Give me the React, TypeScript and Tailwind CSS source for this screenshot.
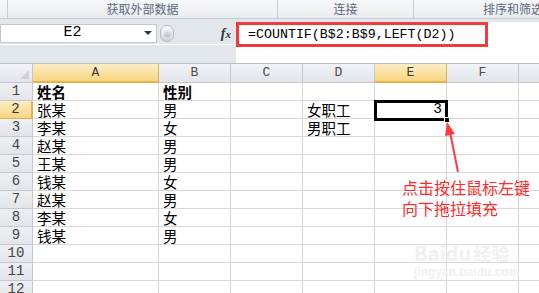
import React from 'react';

const cjk = "font-['Noto_Sans_CJK_SC','Noto_Sans',sans-serif]";
const mono = "font-['Liberation_Mono','DejaVu_Sans_Mono',monospace]";

// 表格数据 (A..G)
const rows: string[][] = [
  ['姓名', '性别', '', '', '', '', ''],
  ['张某', '男', '', '女职工', '3', '', ''],
  ['李某', '女', '', '男职工', '', '', ''],
  ['赵某', '男', '', '', '', '', ''],
  ['王某', '男', '', '', '', '', ''],
  ['钱某', '女', '', '', '', '', ''],
  ['赵某', '男', '', '', '', '', ''],
  ['李某', '女', '', '', '', '', ''],
  ['钱某', '男', '', '', '', '', ''],
  ['', '', '', '', '', '', ''],
  ['', '', '', '', '', '', ''],
  ['', '', '', '', '', '', ''],
];

// G 列在画面外，标题字母看不到
const letters = ['A', 'B', 'C', 'D', 'E', 'F', ''];
const gridCols = 'grid grid-cols-[33px_126px_72px_72px_72px_72px_72px_100px]';

function ColHeader({ label, active }: { label: string; active: boolean }) {
  return (
    <div
      className={`h-[19px] flex items-center justify-center border-r text-[13px] ${mono} ${
        active
          ? 'bg-gradient-to-b from-[#fdeec6] to-[#f8d57e] border-r-[#d9b35c] border-b-2 border-b-[#e9b14a] text-[#3a3a3a]'
          : 'bg-gradient-to-b from-[#f1f3f6] to-[#e1e5ea] border-r-[#c3c8cf] border-b border-b-[#c3c8cf] text-[#4a4a4a]'
      }`}
    >
      {label}
    </div>
  );
}

export default function App() {
  return (
    <div className="relative w-[539px] h-[293px] overflow-hidden bg-white select-none">
      {/* Ribbon 分组标签 */}
      <div className={`flex h-[19px] bg-gradient-to-b from-[#f7f8fa] to-[#e8ebef] border-b border-[#c8cdd4] text-[12px] leading-[18px] text-[#5e6878] ${cjk}`}>
        <div className="w-[8px] shrink-0 border-r border-[#c9ced6]" />
        <div className="w-[270px] shrink-0 border-r border-[#c9ced6] flex items-center justify-center">获取外部数据</div>
        <div className="w-[136px] shrink-0 border-r border-[#c9ced6] flex items-center justify-center">连接</div>
        <div className="w-[125px] shrink-0 pl-[69px] flex items-center whitespace-nowrap overflow-hidden">排序和筛选</div>
      </div>

      {/* 编辑栏 */}
      <div className="flex h-[45px] bg-[#e3e6eb] border-b border-[#b9bec6]">
        <div className="w-[236px] shrink-0 flex flex-col">
          <div className="h-[5px]" />
          <div className="flex h-[19px] items-center">
            <div className={`w-[157px] h-[19px] bg-white border border-[#c2c7ce] flex items-center relative ${mono} text-[15px] text-black`}>
              <span className="flex-1 text-center pr-[12px]">E2</span>
              <span className="absolute right-[4px] top-[6px] w-0 h-0 border-l-[4px] border-r-[4px] border-t-[4px] border-l-transparent border-r-transparent border-t-[#333]" />
            </div>
            <div className="ml-[3px] w-[14px] h-[17px] rounded-full bg-gradient-to-b from-[#fdfdfd] to-[#cfd3d9] border border-[#b3b8c0] flex items-center justify-center">
              <div className="w-[7px] h-[7px] rounded-full bg-gradient-to-b from-[#e9ebee] to-[#b8bdc4]" />
            </div>
            <div className="flex-1 flex justify-end pr-[5px]">
              <span className="font-['Liberation_Serif',serif] italic font-bold text-[14px] text-[#333] leading-none">
                f<span className="text-[11px]">x</span>
              </span>
            </div>
          </div>
          <div className="flex-1 mt-[1px] border-t border-white" />
        </div>
        <div className="flex-1 mt-[3px] bg-white flex flex-col">
          <div className={`w-[252px] h-[25px] border-[3px] border-[#f23a3a] flex items-center pl-[9px] ${mono} text-[13.3px] text-black whitespace-nowrap`}>
            =COUNTIF(B$2:B$9,LEFT(D2))
          </div>
        </div>
      </div>

      {/* 列标题 */}
      <div className={gridCols}>
        <div className="h-[19px] bg-gradient-to-b from-[#f1f3f6] to-[#e1e5ea] border-r border-b border-[#c3c8cf] flex items-end justify-end p-[3px]">
          <span className="w-0 h-0 border-b-[9px] border-b-[#cdd1d7] border-l-[9px] border-l-transparent" />
        </div>
        {letters.map((l, k) => (
          <ColHeader key={k} label={l} active={l === 'A' || l === 'E'} />
        ))}
      </div>

      {/* 数据行 */}
      {rows.map((r, i) => (
        <div key={i} className={gridCols}>
          <div
            className={`h-[18px] flex items-center justify-center border-r border-b text-[14px] leading-[17px] ${mono} ${
              i === 1
                ? 'bg-gradient-to-b from-[#fdeec6] to-[#f8d57e] border-b-[#d9b35c] border-r-2 border-r-[#e9b14a] text-[#333]'
                : 'bg-gradient-to-b from-[#eef0f3] to-[#e2e5e9] border-[#c3c8cf] text-[#444]'
            }`}
          >
            {i + 1}
          </div>
          {r.map((c, j) => (
            <div
              key={j}
              className={`h-[18px] border-r border-b border-[#d8d8d8] flex items-center px-[4px] whitespace-nowrap text-[14.5px] leading-[17px] text-black ${
                j === 4 ? `justify-end ${mono}` : cjk
              } ${i === 0 ? 'font-bold' : ''}`}
            >
              {c}
            </div>
          ))}
        </div>
      ))}

      {/* 选中单元格 E2 */}
      <div className="absolute left-[374px] top-[100px] w-[74px] h-[21px] border-[3px] border-black pointer-events-none" />
      <div className="absolute left-[444px] top-[117px] w-[6px] h-[6px] bg-black border border-white" />

      {/* 红色箭头 */}
      <svg className="absolute left-0 top-0" width="539" height="293" viewBox="0 0 539 293">
        <line x1="458" y1="172" x2="450" y2="132" stroke="#ff3b3b" strokeWidth="2" />
        <polygon points="447,122 455,134 445,136" fill="#ff3b3b" />
      </svg>

      {/* 说明文字 */}
      <div className={`absolute left-[402px] top-[177px] text-[16px] leading-[21px] text-[#ff2a2a] ${cjk}`}>
        <div>点击按住鼠标左键</div>
        <div>向下拖拉填充</div>
      </div>

      {/* 水印 */}
      <div className="absolute left-[414px] top-[241px] text-[#f0f0f0] pointer-events-none">
        <div className={`text-[20px] font-bold leading-[24px] ${cjk}`}>Baidu<span className="text-[18px] ml-[2px]">经验</span></div>
        <div className="font-['Liberation_Sans',sans-serif] text-[12px] font-bold leading-[14px]">jingyan.baidu.com</div>
      </div>
    </div>
  );
}
